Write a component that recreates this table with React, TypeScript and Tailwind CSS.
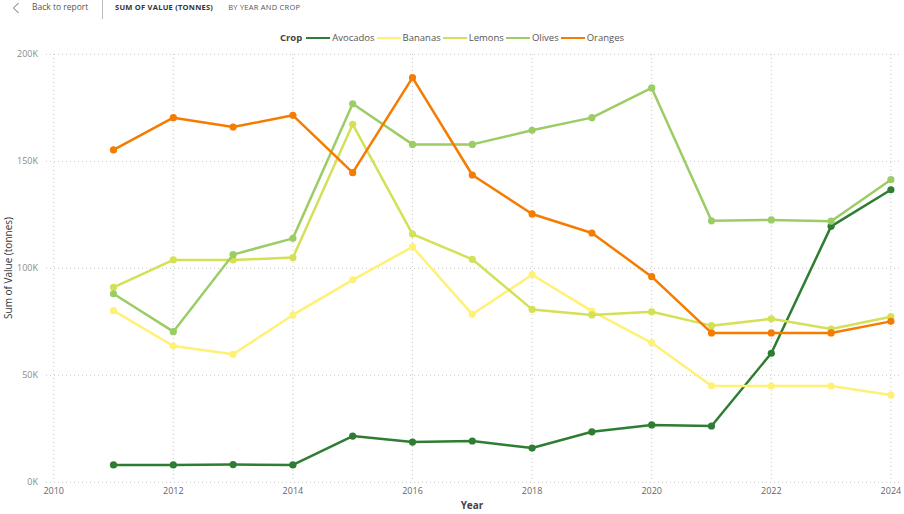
import React from "react";

const years = [2011, 2012, 2013, 2014, 2015, 2016, 2017, 2018, 2019, 2020, 2021, 2022, 2023, 2024];

const series = [
  {
    name: "Avocados",
    color: "#2e7d32",
    values: [8.1, 8.1, 8.3, 8.1, 21.6, 18.8, 19.3, 16.0, 23.6, 26.8, 26.3, 60.3, 119.6, 136.7],
  },
  {
    name: "Bananas",
    color: "#fff176",
    values: [80.2, 63.7, 59.8, 78.2, 94.6, 110.0, 78.5, 97.0, 80.0, 65.2, 45.1, 45.0, 45.0, 40.8],
  },
  {
    name: "Lemons",
    color: "#d4e157",
    values: [91.1, 103.9, 103.9, 105.0, 167.3, 116.0, 104.2, 80.8, 78.2, 79.7, 73.2, 76.4, 71.6, 77.4],
  },
  {
    name: "Olives",
    color: "#9ccc65",
    values: [88.1, 70.4, 106.4, 114.0, 176.9, 157.9, 157.9, 164.5, 170.4, 184.3, 122.2, 122.6, 122.0, 141.4],
  },
  {
    name: "Oranges",
    color: "#f57c00",
    values: [155.3, 170.4, 166.0, 171.5, 144.7, 189.1, 143.6, 125.4, 116.5, 96.1, 69.8, 69.8, 69.8, 75.2],
  },
];

// page coordinates of the plot
const x = (yr: number) => 53.7 + 59.8 * (yr - 2010);
const y = (v: number) => 482.3 - v * 2.14;

const TOP = 48; // where the svg begins on the page

function Chart() {
  return (
    <svg width={904} height={514 - TOP} className="block">
      <g transform={`translate(0,${-TOP})`} fontFamily="'Open Sans', 'Noto Sans', sans-serif">
        {/* horizontal grid + y ticks */}
        {[0, 50, 100, 150, 200].map((v) => (
          <g key={v}>
            <line x1={46} x2={902} y1={y(v)} y2={y(v)} stroke="#c8c8c8" strokeWidth={1} strokeDasharray="1 3" />
            <text x={38} y={y(v) + 3} fontSize={9} fill="#8a8a8a" textAnchor="end">
              {v}K
            </text>
          </g>
        ))}
        {/* vertical grid + x ticks */}
        {[2010, 2012, 2014, 2016, 2018, 2020, 2022, 2024].map((yr) => (
          <g key={yr}>
            <line x1={x(yr)} x2={x(yr)} y1={54} y2={482} stroke="#c8c8c8" strokeWidth={1} strokeDasharray="1 3" />
            <text x={x(yr)} y={494} fontSize={9} fill="#666" textAnchor="middle">
              {yr}
            </text>
          </g>
        ))}

        {series.map((s) => (
          <g key={s.name}>
            <polyline
              points={s.values.map((v, i) => `${x(years[i])},${y(v)}`).join(" ")}
              fill="none"
              stroke={s.color}
              strokeWidth={2.5}
              strokeLinejoin="round"
            />
            {s.values.map((v, i) => (
              <circle key={i} cx={x(years[i])} cy={y(v)} r={3.6} fill={s.color} />
            ))}
          </g>
        ))}

        <text x={472} y={509} fontSize={10} fontWeight={700} fill="#444" textAnchor="middle">
          Year
        </text>
        <text
          x={0}
          y={0}
          fontSize={10}
          fill="#333"
          textAnchor="middle"
          transform="translate(12,268) rotate(-90)"
        >
          Sum of Value (tonnes)
        </text>
      </g>
    </svg>
  );
}

export default function App() {
  return (
    <div className="w-[904px] h-[514px] bg-white overflow-hidden font-['Open_Sans','Noto_Sans',sans-serif]">
      {/* header */}
      <div className="flex items-start h-[19px]">
        <div className="flex items-center h-[15px] pl-[12px] w-[102px] text-[8.5px] text-[#555]">
          <svg width="8" height="12" viewBox="0 0 8 12" className="mr-[12px]">
            <path d="M6.5 1 L1.5 6 L6.5 11" fill="none" stroke="#666" strokeWidth="1" />
          </svg>
          <span>Back to report</span>
        </div>
        <div className="w-px h-[19px] bg-[#bbb]" />
        <div className="flex items-center h-[15px] pl-[12px] gap-[15px] text-[7.5px] tracking-[0.25px]">
          <span className="font-bold text-[#333]">SUM OF VALUE (TONNES)</span>
          <span className="text-[#555]">BY YEAR AND CROP</span>
        </div>
      </div>

      {/* legend */}
      <div className="flex justify-center items-center h-[29px] pt-[9px] pl-[2px] text-[9.5px] text-[#555]">
        <span className="font-bold text-[#444] mr-[4px]">Crop</span>
        {series.map((s) => (
          <div key={s.name} className="flex items-center">
            <span className="w-[24px] h-[2px] mr-[2px]" style={{ backgroundColor: s.color }} />
            <span className="mr-[2px]">{s.name}</span>
          </div>
        ))}
      </div>

      <Chart />
    </div>
  );
}
